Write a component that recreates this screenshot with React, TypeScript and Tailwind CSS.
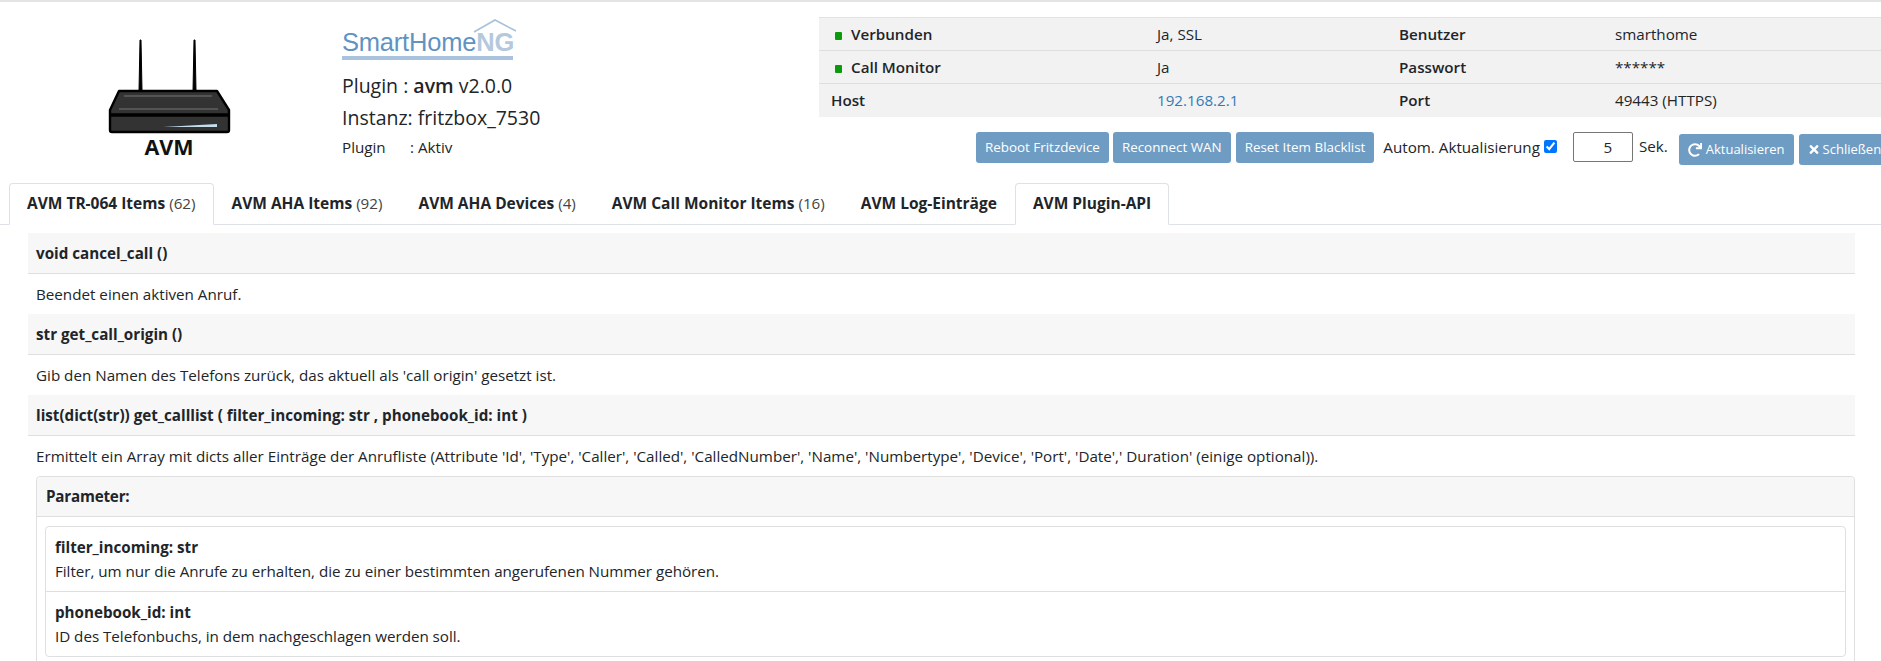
import React from 'react'
import { FaRedo, FaTimes } from 'react-icons/fa'

const Dot = () => <span className="inline-block w-[7px] h-[8px] bg-[#0a9a0a] mr-[9px] rounded-[1px]"></span>

const Row = ({ a, b, c, d, dot, link, last }: { a: string; b: string; c: string; d: string; dot?: boolean; link?: boolean; last?: boolean }) => (
  <div className={`grid grid-cols-[326px_242px_216px_1fr] h-[33px] items-center bg-[#f2f2f2] text-[#212529] ${last ? '' : 'border-b border-[#dedede]'}`}>
    <div className={`font-semibold ${dot ? 'pl-[16px]' : 'pl-[12px]'}`}>{dot && <Dot />}{a}</div>
    <div className={`pl-[12px] ${link ? 'text-[#337ab7]' : ''}`}>{b}</div>
    <div className="pl-[12px] font-semibold">{c}</div>
    <div className="pl-[12px]">{d}</div>
  </div>
)

const Btn = ({ children, className }: { children: React.ReactNode; className?: string }) => (
  <button className={`h-[31px] px-[9px] rounded-[3px] bg-[#6f9cc3] text-white text-[13.4px] whitespace-nowrap flex items-center ${className ?? ''}`}>{children}</button>
)

const Router = () => (
  <svg width="130" height="100" viewBox="105 35 130 100" className="block">
    <path d="M140 40 L139 91 H142 L141 40 Z M194 40 L193 91 H196 L195 40 Z" fill="#000" stroke="#000" strokeWidth="1" />
    <path d="M119 91 H217 L229 110 V130 Q229 132 227 132 H112 Q110 132 110 130 V110 Z" fill="#333" stroke="#000" strokeWidth="2.4" strokeLinejoin="round" />
    <path d="M110 115 H229" stroke="#000" strokeWidth="3.5" />
    <path d="M124 96 H212 M119 109 H218" stroke="#777" strokeWidth="1" />
    <path d="M163 127 L217 124 V127 Z" fill="#c5dcec" />
  </svg>
)

const Logo = () => (
  <div className="relative w-[178px] h-[42px] mt-[17px]">
    <svg className="absolute left-[130px] top-0" width="48" height="16" viewBox="0 0 48 16">
      <path d="M2 13 L23 1 L44 12" fill="none" stroke="#a9c1d8" strokeWidth="1.6" />
    </svg>
    <div className="pt-[10px] text-[25.5px] leading-[26px] tracking-[-0.2px] font-['Liberation_Sans',sans-serif] text-[#5f93c3]">
      SmartHome<span className="font-bold text-[#b4c9dd]">NG</span>
    </div>
    <div className="w-[171px] h-[4px] mt-[1px] bg-[#a9c3de]"></div>
  </div>
)

const Tab = ({ name, count, active }: { name: string; count?: string; active?: boolean }) => (
  <div className={`h-[42px] px-[17px] flex items-center whitespace-nowrap rounded-t-[4px] border -mb-px ${active ? 'bg-white border-[#dee2e6] border-b-white' : 'border-transparent'}`}>
    <div className="flex items-baseline">
      <span className="font-bold text-[15.5px] text-[#212529]">{name}</span>
      {count && <span className="ml-[4px] text-[#444]">{count}</span>}
    </div>
  </div>
)

const Method = ({ sig, desc }: { sig: string; desc: string }) => (
  <>
    <div className="h-[41px] flex items-center px-[8px] bg-[#f7f7f7] border-b border-[#dfdfdf] font-bold">{sig}</div>
    <div className="h-[40px] flex items-center px-[8px]">{desc}</div>
  </>
)

const Param = ({ name, desc, last }: { name: string; desc: string; last?: boolean }) => (
  <div className={`px-[9px] py-[8px] leading-[24px] ${last ? '' : 'border-b border-[#dfdfdf]'}`}>
    <div className="font-bold">{name}</div>
    <div className="tracking-[-0.03px]">{desc}</div>
  </div>
)

const App = () => {
  return (
    <div className="w-screen h-screen overflow-hidden bg-white border-t-2 border-[#e4e4e4] text-[15.2px] text-[#212529] font-['Open_Sans',sans-serif]">
      <div className="flex h-[181px]">
        <div className="w-[342px] shrink-0 flex flex-col pl-[105px] pt-[33px]">
          <Router />
          <div className="w-[130px] text-center text-[21.5px] leading-[26px] font-bold text-[#111] -mt-[1px] pr-[2px]">AVM</div>
        </div>
        <div className="w-[477px] shrink-0">
          <Logo />
          <div className="mt-[10px] text-[19.5px] leading-[30px]">Plugin : <span className="font-semibold">avm</span> v2.0.0</div>
          <div className="mt-[2px] text-[19.5px] leading-[30px]">Instanz: fritzbox_7530</div>
          <div className="mt-[2px] flex leading-[24px]"><span className="w-[68px]">Plugin</span><span>: Aktiv</span></div>
        </div>
        <div className="flex-1 min-w-0 pt-[15px]">
          <div className="border-t border-[#e2e2e2]">
            <Row dot a="Verbunden" b="Ja, SSL" c="Benutzer" d="smarthome" />
            <Row dot a="Call Monitor" b="Ja" c="Passwort" d="******" />
            <Row link last a="Host" b="192.168.2.1" c="Port" d="49443 (HTTPS)" />
          </div>
          <div className="flex items-start mt-[15px] pl-[157px] whitespace-nowrap">
            <Btn>Reboot Fritzdevice</Btn>
            <Btn className="ml-[4px]">Reconnect WAN</Btn>
            <Btn className="ml-[5px] px-[8px]">Reset Item Blacklist</Btn>
            <span className="ml-[9px] mt-[4px]">Autom. Aktualisierung</span>
            <input type="checkbox" defaultChecked className="ml-[4px] mt-[8px] w-[13px] h-[13px] accent-[#0075ff]" />
            <input defaultValue="5" className="ml-[16px] w-[60px] h-[30px] border border-[#767676] rounded-[2px] text-center pl-[10px] text-[15.2px]" />
            <span className="ml-[6px] mt-[3px]">Sek.</span>
            <Btn className="ml-[11px] mt-[2px] !text-[13px]"><FaRedo className="w-[14px] h-[14px] mr-[4px]" />Aktualisieren</Btn>
            <Btn className="ml-[5px] mt-[2px] !text-[13px]"><FaTimes className="w-[12px] h-[13px] mr-[3px]" />Schließen</Btn>
          </div>
        </div>
      </div>
      <div className="flex pl-[9px] border-b border-[#dee2e6] h-[42px]">
        <Tab name="AVM TR-064 Items" count="(62)" active />
        <Tab name="AVM AHA Items" count="(92)" />
        <Tab name="AVM AHA Devices" count="(4)" />
        <Tab name="AVM Call Monitor Items" count="(16)" />
        <Tab name="AVM Log-Einträge" />
        <Tab name="AVM Plugin-API" active />
      </div>
      <div className="pl-[28px] pr-[26px] pt-[8px]">
        <Method sig="void cancel_call ()" desc="Beendet einen aktiven Anruf." />
        <Method sig="str get_call_origin ()" desc="Gib den Namen des Telefons zurück, das aktuell als 'call origin' gesetzt ist." />
        <Method sig="list(dict(str)) get_calllist ( filter_incoming: str , phonebook_id: int )" desc="Ermittelt ein Array mit dicts aller Einträge der Anrufliste (Attribute 'Id', 'Type', 'Caller', 'Called', 'CalledNumber', 'Name', 'Numbertype', 'Device', 'Port', 'Date',' Duration' (einige optional))." />
        <div className="ml-[8px] border border-[#dfdfdf] rounded-[4px]">
          <div className="h-[40px] flex items-center px-[9px] bg-[#f7f7f7] border-b border-[#dfdfdf] font-bold tracking-[-0.2px] rounded-t-[4px]">Parameter:</div>
          <div className="p-[8px] pt-[9px]">
            <div className="border border-[#dfdfdf] rounded-[4px]">
              <Param name="filter_incoming: str" desc="Filter, um nur die Anrufe zu erhalten, die zu einer bestimmten angerufenen Nummer gehören." />
              <Param last name="phonebook_id: int" desc="ID des Telefonbuchs, in dem nachgeschlagen werden soll." />
            </div>
          </div>
        </div>
      </div>
    </div>
  )
}

export default App
